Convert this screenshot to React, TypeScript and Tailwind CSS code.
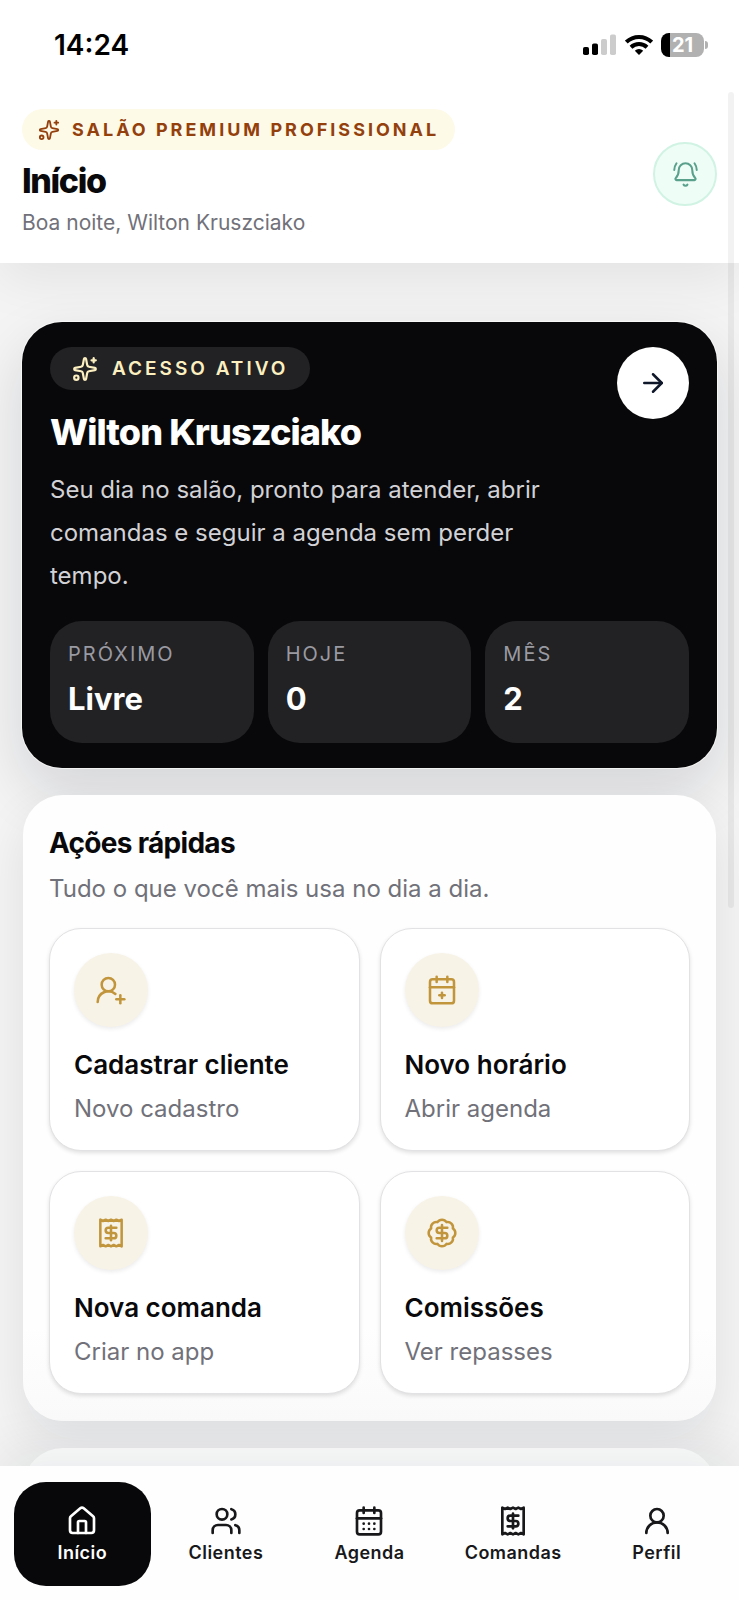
import {
  ArrowRight,
  BadgeDollarSign,
  BellRing,
  CalendarDays,
  CalendarPlus2,
  House,
  Receipt,
  Sparkles,
  UserRound,
  UserRoundPlus,
  Users,
} from "lucide-react";

const stats = [
  { label: "Próximo", value: "Livre" },
  { label: "Hoje", value: "0" },
  { label: "Mês", value: "2" },
];

const actions = [
  { icon: UserRoundPlus, title: "Cadastrar cliente", text: "Novo cadastro" },
  { icon: CalendarPlus2, title: "Novo horário", text: "Abrir agenda" },
  { icon: Receipt, title: "Nova comanda", text: "Criar no app" },
  { icon: BadgeDollarSign, title: "Comissões", text: "Ver repasses" },
];

const tabs = [
  { icon: House, label: "Início", href: "#inicio", active: true },
  { icon: Users, label: "Clientes", href: "#clientes" },
  { icon: CalendarDays, label: "Agenda", href: "#agenda" },
  { icon: Receipt, label: "Comandas", href: "#comandas" },
  { icon: UserRound, label: "Perfil", href: "#perfil" },
];

function StatusBar() {
  return (
    <div className="flex h-[90px] items-center justify-between pr-[31px] pl-[54px]">
      <span className="text-[28px] leading-8 font-semibold text-black">14:24</span>
      <div className="flex items-center gap-2">
        {/* Signal */}
        <svg width="34" height="22" viewBox="0 0 34 22">
          <rect x="0" y="13" width="6" height="8" rx="1.8" fill="#000" />
          <rect x="9" y="9.5" width="6" height="11.5" rx="1.8" fill="#000" />
          <rect x="18" y="5" width="6" height="16" rx="1.8" fill="#ccc" />
          <rect x="27" y="0.5" width="6" height="20.5" rx="1.8" fill="#ccc" />
        </svg>
        {/* Wifi */}
        <svg width="28" height="22" viewBox="0 0 28 22" fill="none" stroke="#000" strokeWidth="4">
          <path d="M1.3 8.1a18.2 18.2 0 0 1 25.4 0" />
          <path d="M6 13.2a11.6 11.6 0 0 1 16 0" />
          <path d="M14 21l-4.2-4.2a6 6 0 0 1 8.4 0z" fill="#000" stroke="none" />
        </svg>
        {/* Battery */}
        <div className="flex items-center gap-px">
          <div className="flex h-6 w-[43px] items-center justify-center rounded-lg bg-linear-to-r from-black from-22% to-[#b1b1b1] to-22% text-xl leading-6 font-bold text-white">
            21
          </div>
          <div className="h-2 w-[3px] rounded-r-full bg-[#b1b1b1]" />
        </div>
      </div>
    </div>
  );
}

function Header() {
  return (
    <header className="relative z-10 bg-white shadow-[0_16px_50px_rgba(15,15,15,0.07)]">
      <StatusBar />
      <div className="flex items-center justify-between px-[22px] pt-[19px] pb-6">
        <div>
          <div className="inline-flex h-[41px] items-center gap-3 rounded-full bg-[#fefae8] px-4 text-lg font-bold tracking-[3px] text-[#93400d] uppercase">
            <Sparkles size={22} strokeWidth={2} />
            Salão Premium Profissional
          </div>
          <h1 className="mt-[7px] text-[34px] leading-12 font-extrabold tracking-[-0.04em] text-[#09090b]">
            Início
          </h1>
          <p className="mt-0.5 text-[21px] leading-8 text-[#71717a]">Boa noite, Wilton Kruszciako</p>
        </div>
        <button
          type="button"
          aria-label="Notificações"
          className="flex size-16 items-center justify-center rounded-full border-2 border-[#d0f3e4] bg-[#effdf7] text-[#5aa18c]"
        >
          <BellRing size={27} strokeWidth={1.8} />
        </button>
      </div>
    </header>
  );
}

function Hero() {
  return (
    <section className="rounded-[40px] bg-[#08080a] px-7 py-[25px] text-white shadow-[0_24px_60px_rgba(15,23,42,0.14)] ring-1 ring-white/60">
      <div className="flex items-start justify-between">
        <div className="max-w-[520px]">
          <div className="inline-flex h-[43px] items-center gap-[14px] rounded-full bg-[#222224] px-[22px] pt-px text-[19px] font-semibold tracking-[3px] text-[#fdf0c0] uppercase">
            <Sparkles size={26} strokeWidth={2} />
            Acesso ativo
          </div>
          <h2 className="mt-[18px] text-[36px] leading-12 font-extrabold tracking-tight">
            Wilton Kruszciako
          </h2>
          <p className="mt-3 text-2xl leading-[43px] text-[#d2d2d6]">
            Seu dia no salão, pronto para atender, abrir comandas e seguir a agenda sem perder
            tempo.
          </p>
        </div>
        <button
          type="button"
          aria-label="Abrir"
          className="flex size-[72px] shrink-0 items-center justify-center rounded-full bg-white text-[#0f172a]"
        >
          <ArrowRight size={30} strokeWidth={2} />
        </button>
      </div>

      <dl className="mt-6 grid grid-cols-3 gap-[14px]">
        {stats.map((s) => (
          <div key={s.label} className="rounded-[32px] bg-[#222224] px-[18px] pt-[17px] pb-5">
            <dt className="text-xl leading-8 tracking-widest text-[#9a9aa2] uppercase">{s.label}</dt>
            <dd className="mt-[5px] text-[31px] leading-12 font-bold">{s.value}</dd>
          </div>
        ))}
      </dl>
    </section>
  );
}

function QuickActions() {
  return (
    <section className="mx-px rounded-[40px] bg-linear-to-b from-[#fefefe] from-85% to-[#fafafa] px-[26px] pt-7 pb-[27px] shadow-[0_20px_50px_rgba(15,23,42,0.09)]">
      <h2 className="text-[28px] leading-10 font-bold tracking-tight text-[#09090b]">
        Ações rápidas
      </h2>
      <p className="mt-2 text-2xl leading-9 text-[#71717a]">Tudo o que você mais usa no dia a dia.</p>
      <div className="mt-[21px] grid grid-cols-2 gap-5">
        {actions.map(({ icon: Icon, title, text }) => (
          <button
            key={title}
            type="button"
            className="rounded-[32px] border border-[#e2e2e4] bg-white px-6 pt-6 pb-[21px] text-left shadow-[0_2px_4px_rgba(0,0,0,0.12)]"
          >
            <span className="flex size-[74px] items-center justify-center rounded-full bg-[#f8f3e7] text-[#c1953c] shadow-[0_2px_4px_rgba(0,0,0,0.08)]">
              <Icon size={32} strokeWidth={1.9} />
            </span>
            <span className="mt-[18px] block text-[26px] leading-10 font-semibold text-[#09090b]">
              {title}
            </span>
            <span className="mt-1 block text-2xl leading-10 text-[#71717a]">{text}</span>
          </button>
        ))}
      </div>
    </section>
  );
}

function TabBar() {
  return (
    <nav className="relative z-10 grid grid-cols-5 gap-[7px] bg-[#fefefe] px-[14px] pt-4 pb-[14px] shadow-[0_-16px_50px_rgba(15,23,42,0.08)]">
      {tabs.map(({ icon: Icon, label, href, active }) => (
        <a
          key={label}
          href={href}
          aria-current={active ? "page" : undefined}
          className={
            active
              ? "flex h-[104px] flex-col items-center justify-center gap-1 rounded-[32px] bg-[#08080a] pt-0.5 text-white"
              : "flex h-[104px] flex-col items-center justify-center gap-1 rounded-[32px] pt-0.5 text-[#18181b]"
          }
        >
          <Icon size={32} strokeWidth={2} />
          <span className="text-lg leading-6 font-semibold tracking-wide">{label}</span>
        </a>
      ))}
    </nav>
  );
}

export default function App() {
  return (
    <div className="relative flex h-screen flex-col overflow-hidden bg-[#f4f4f4] font-['Inter',sans-serif]">
      <Header />
      <main className="flex min-h-0 flex-1 flex-col gap-[27px] overflow-hidden px-[22px] pt-[59px] *:shrink-0">
        <Hero />
        <QuickActions />
        <section className="mx-px h-40 rounded-[40px] bg-[#fdfdfd]" />
      </main>
      <TabBar />
      {/* Scroll indicator */}
      <div className="absolute top-[92px] right-[5px] z-20 h-[816px] w-[6px] rounded-full bg-black/5" />
    </div>
  );
}
